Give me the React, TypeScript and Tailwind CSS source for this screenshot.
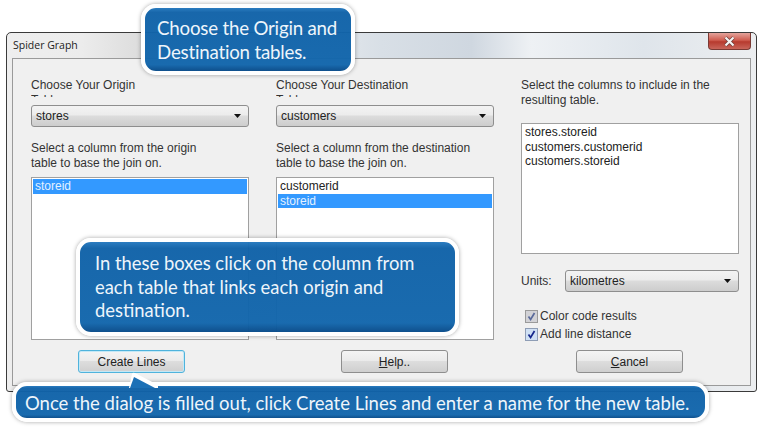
const Sel = ({ text, className }: { text: string; className: string }) => (
  <div className={`flex items-center justify-between h-[22px] pl-[4px] pr-[5px] rounded-[3px] border border-[#8e8e8e] bg-[linear-gradient(#f3f3f3,#ececec_45%,#dcdcdc_50%,#cdcdcd)] text-[12px] text-[#222] ${className}`}>
    <span>{text}</span>
    <svg width="8" height="4" viewBox="0 0 8 4" className="mr-[1px]"><path d="M0 0h7L3.5 4z" fill="#111" /></svg>
  </div>
);

const Btn = ({ children, active, className }: { children: React.ReactNode; active?: boolean; className?: string }) => (
  <div className={`flex items-center justify-center w-[107px] h-[23px] rounded-[3px] border bg-[linear-gradient(#f4f4f4,#ebebeb_45%,#dddddd_50%,#cfcfcf)] text-[12px] text-[#222] ${active ? "border-[#4fb3dc] shadow-[inset_0_0_0_1px_#c4e8f6]" : "border-[#8e8e8e]"} ${className ?? ""}`}>
    {children}
  </div>
);

const Check = ({ label, faded }: { label: string; faded?: boolean }) => (
  <div className="flex items-center h-[18px] pl-[4px] text-[12px] text-[#333]">
    <div className={`flex items-center justify-center w-[13px] h-[13px] border mr-[2px] ${faded ? "border-[#9a9a9a] bg-[#d2d2d6]" : "border-[#8e9db5] bg-[#cfe0f4]"}`}>
      <svg width="9" height="9" viewBox="0 0 9 9"><path d="M1.5 4.5L3.6 7.5L7.5 1" fill="none" stroke={faded ? "#5a6a9a" : "#15278c"} strokeWidth="1.7" /></svg>
    </div>
    {label}
  </div>
);

const callout = "absolute border-[4px] border-white rounded-[15px] shadow-[0_0_4px_rgba(0,0,0,0.35)] bg-[linear-gradient(rgba(36,120,190,0.97),rgba(16,98,168,0.97)_7%,rgba(18,102,172,0.97)_90%,rgba(10,76,138,0.98))] text-[#eef5fb] [font-family:Lato,'Open_Sans',sans-serif] whitespace-nowrap";

const Column = ({ title, clipped, select, prompt, rows, selected }: { title: string; clipped: string; select: string; prompt: string[]; rows: string[]; selected: string }) => (
  <div className="flex flex-col">
    <div className="h-[19px] overflow-hidden leading-[14.5px] text-[12px] text-[#333]">
      {title}<br />{clipped}
    </div>
    <Sel text={select} className="mt-[8px]" />
    <div className="mt-[14px] h-[30px] leading-[14.5px] text-[12px] text-[#333]">{prompt[0]}<br />{prompt[1]}</div>
    <div className="mt-[6px] h-[163px] border border-[#a0a0a0] bg-white p-[1px] text-[12px] text-[#222] leading-[14.5px]">
      {rows.map((r) => (
        <div key={r} className={`pl-[2px] h-[14.5px] ${r === selected ? "bg-[#3399ff] text-[#e4f1ff]" : ""}`}>{r}</div>
      ))}
    </div>
  </div>
);

export default function App() {
  return (
    <div className="relative w-[762px] h-[427px] overflow-hidden bg-white pt-[32px] pl-[6px] [font-family:'Liberation_Sans',Arial,sans-serif]">
      <div className="w-[751px] h-[360px] rounded-t-[5px] rounded-b-[3px] border border-[#3a3a3a] bg-[linear-gradient(90deg,#eeeeee_0%,#ececec_10%,#dcdcdc_18%,#eef0f2_36%,#d8dfe6_50%,#cfd7e0_62%,#eef1f4_70%,#dfe5eb_85%,#eceef0_100%)] px-[5px] flex flex-col">
        <div className="relative h-[25px] shrink-0 flex items-center">
          <span className="pl-[1px] text-[10.5px] text-[#222] [font-family:'Open_Sans',sans-serif]">Spider Graph</span>
          <div className="absolute right-[0px] top-[0px] w-[43px] h-[17px] rounded-b-[4px] border border-t-0 border-[#7a3a34] bg-[linear-gradient(#e4a49c,#cf5d50_45%,#b73a2e_55%,#c9655a)] flex items-center justify-center">
            <svg width="13" height="11" viewBox="0 0 13 11"><path d="M2.5 1.5L10.5 9.5M10.5 1.5L2.5 9.5" stroke="#6b3a36" strokeWidth="3.6" /><path d="M2.5 1.5L10.5 9.5M10.5 1.5L2.5 9.5" stroke="#f4f4f4" strokeWidth="2.2" /></svg>
          </div>
        </div>
        <div className="w-[739px] h-[328px] border border-[#9a9a9a] bg-[#f0f0f0] pt-[19px] pl-[18px]">
          <div className="grid grid-cols-[218px_218px_218px] gap-x-[27px]">
            <Column title="Choose Your Origin" clipped="Table" select="stores" prompt={["Select a column from the origin", "table to base the join on."]} rows={["storeid"]} selected="storeid" />
            <Column title="Choose Your Destination" clipped="Table" select="customers" prompt={["Select a column from the destination", "table to base the join on."]} rows={["customerid", "storeid"]} selected="storeid" />
            <div className="flex flex-col">
              <div className="h-[30px] leading-[14.5px] text-[12px] text-[#333]">Select the columns to include in the<br />resulting table.</div>
              <div className="mt-[15px] h-[131px] border border-[#a0a0a0] bg-white p-[1px] pl-[3px] text-[12px] text-[#222] leading-[14.5px]">
                <div>stores.storeid</div>
                <div>customers.customerid</div>
                <div>customers.storeid</div>
              </div>
              <div className="mt-[16px] flex items-center text-[12px] text-[#333]">
                <span className="w-[44px]">Units:</span>
                <Sel text="kilometres" className="w-[174px]" />
              </div>
              <div className="mt-[15px]">
                <Check label="Color code results" faded />
                <Check label="Add line distance" />
              </div>
            </div>
          </div>
          <div className="mt-[7px] flex">
            <Btn active className="ml-[47px]">Create Lines</Btn>
            <Btn className="ml-[156px]"><span><u>H</u>elp..</span></Btn>
            <Btn className="ml-[128px]"><span><u>C</u>ancel</span></Btn>
          </div>
        </div>
      </div>

      <div className={`${callout} left-[141px] top-[4px] w-[214px] h-[71px] pl-[12px] pt-[8px] text-[18.7px] tracking-[-0.2px] leading-[24px]`}>
        Choose the Origin and<br />Destination tables.
      </div>
      <div className={`${callout} left-[76px] top-[238px] w-[383px] h-[98px] pl-[15px] pt-[10px] text-[18.4px] leading-[23.5px]`}>
        In these boxes click on the column from<br />each table that links each origin and<br />destination.
      </div>
      <div className={`${callout} left-[12px] top-[382px] w-[697px] h-[40px] pl-[9px] pt-[5px] text-[18.5px] leading-[24px] rounded-[9px]`}>
        Once the dialog is filled out, click Create Lines and enter a name for the new table.
      </div>
      <svg className="absolute left-[124px] top-[371px]" width="40" height="17" viewBox="0 0 40 17"><path d="M5 17L8 3Q8.5 1 11 2L34 14V17Z" fill="#ffffff" /><path d="M6 17L10 6L31 17Z" fill="#1c70b6" /></svg>
    </div>
  );
}
